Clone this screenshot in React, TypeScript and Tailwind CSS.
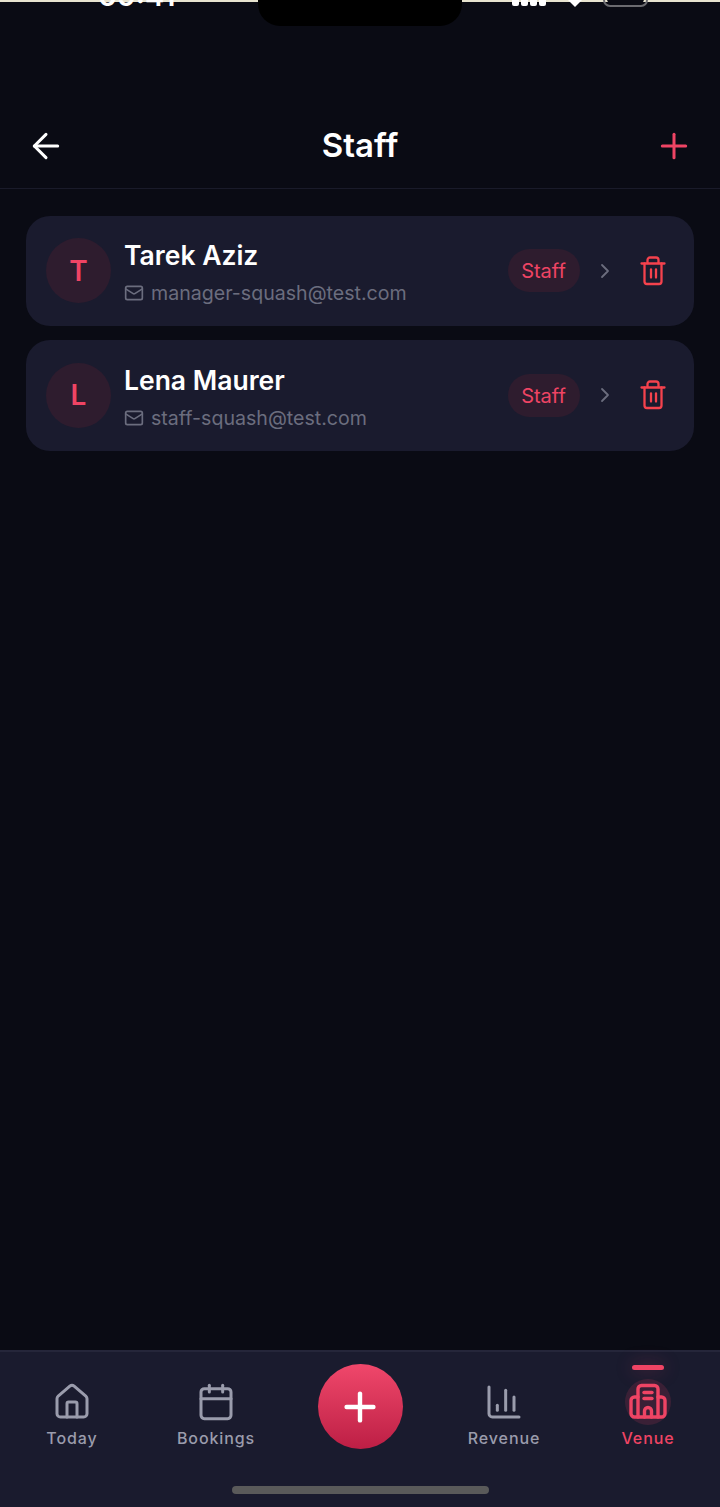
import { ArrowLeft, Plus, Mail, ChevronRight, House, Calendar, ChartColumn } from 'lucide-react'

const STAFF = [
  { name: 'Tarek Aziz', email: 'manager-squash@test.com' },
  { name: 'Lena Maurer', email: 'staff-squash@test.com' },
]

function StatusBar() {
  return (
    <div className="relative h-[120px] shrink-0 overflow-hidden">
      <div className="flex h-0.5 bg-[#e8e4d0]" />
      {/* clipped clock */}
      <span className="absolute left-[98px] top-[-17px] text-[29px] leading-[26px] font-semibold text-white">09:41</span>
      <div className="absolute left-[258px] top-0 h-[26px] w-[204px] rounded-b-[22px] bg-black" />
      <div className="absolute left-[512px] top-0 flex items-end gap-[2px]">
        <div className="h-[6px] w-[7px] rounded-b-[2px] bg-white" />
        <div className="h-[6px] w-[7px] rounded-b-[2px] bg-white" />
        <div className="h-[6px] w-[7px] rounded-b-[2px] bg-white" />
        <div className="h-[6px] w-[7px] rounded-b-[2px] bg-white" />
      </div>
      <svg className="absolute left-[568px] top-0" width="14" height="7" viewBox="0 0 14 7">
        <path d="M0 0h14L7 7z" fill="#fff" />
      </svg>
      <div className="absolute left-[603px] top-[-14px] h-[21px] w-[45px] rounded-[7px] border-2 border-[#6b6b70]" />
      <div className="absolute left-[607px] top-[-10px] h-[13px] w-[37px] rounded-[4px] bg-[#0a0b14]" />
    </div>
  )
}

function TrashIcon() {
  return (
    <svg width="26" height="30" viewBox="0 0 26 30" fill="none" stroke="currentColor" strokeWidth="2.3" strokeLinecap="round" strokeLinejoin="round">
      <path d="M1.5 7.5h23" />
      <path d="M4.5 7.5V25.5a2.5 2.5 0 0 0 2.5 2.5h12a2.5 2.5 0 0 0 2.5-2.5V7.5" />
      <path d="M7.5 7V4a2.5 2.5 0 0 1 2.5-2.5h6a2.5 2.5 0 0 1 2.5 2.5V7" />
      <path d="M11 13.5v8" />
      <path d="M16 13.5v8" />
    </svg>
  )
}

function StaffCard({ name, email }: { name: string; email: string }) {
  return (
    <div className="flex h-[110.5px] items-center rounded-[24px] bg-[#1a1b2e] pl-5 pr-7">
      <div className="flex size-[65px] shrink-0 items-center justify-center rounded-full bg-[#2e1c2e] text-[28px] font-semibold text-[#ef4464]">
        {name[0]}
      </div>
      <div className="ml-[13px] min-w-0 flex-1 pt-1">
        <div className="text-[26.5px] leading-[34px] font-semibold text-white">{name}</div>
        <div className="mt-[7px] flex items-center gap-[7px] text-[19.6px] leading-[28px] text-[#6b6d7e]">
          <Mail size={20} strokeWidth={2} />
          <span>{email}</span>
        </div>
      </div>
      <div className="flex h-[43px] w-[72px] items-center justify-center rounded-full bg-[#2e1c2e] pt-px pr-px text-[20px] text-[#ef4464]">Staff</div>
      <ChevronRight size={24} strokeWidth={1.8} className="ml-[13px] text-[#6b6d7e]" />
      <div className="ml-[23px] text-[#f5424d]">
        <TrashIcon />
      </div>
    </div>
  )
}

function BuildingIcon() {
  return (
    <svg width="38" height="38" viewBox="0 0 38 38" fill="none" stroke="currentColor" strokeWidth="3.4" strokeLinecap="round" strokeLinejoin="round">
      <path d="M9 34V6a3.5 3.5 0 0 1 3.5-3.5h13A3.5 3.5 0 0 1 29 6v28" />
      <path d="M9 14H5.5A3.5 3.5 0 0 0 2 17.5V30.5A3.5 3.5 0 0 0 5.5 34h27a3.5 3.5 0 0 0 3.5-3.5V17.5A3.5 3.5 0 0 0 32.5 14H29" />
      <path d="M15 9.5h8" />
      <path d="M15 15.5h8" />
      <path d="M15.5 34v-6a3.5 3.5 0 0 1 7 0v6" />
    </svg>
  )
}

function NavItem({ label, active, children }: { label: string; active?: boolean; children: React.ReactNode }) {
  return (
    <div className={`flex w-[144px] flex-col items-center ${active ? 'text-[#ef4464]' : 'text-[#9a9cac]'}`}>
      <div className="flex h-[40px] items-center justify-center">{children}</div>
      <span className="mt-[6px] text-[16px] leading-[20px] font-medium tracking-[0.9px]">{label}</span>
    </div>
  )
}

export default function App() {
  return (
    <div className="flex h-[1507px] w-[720px] flex-col overflow-hidden bg-[#0a0b14] font-['Inter',sans-serif]">
      <StatusBar />
      <header className="flex h-[69px] shrink-0 items-center justify-between border-b border-[#1a1b2a] px-[26px] pb-[17px]">
        <ArrowLeft size={40} strokeWidth={1.8} className="text-white" />
        <h1 className="text-[33px] font-semibold text-white">Staff</h1>
        <Plus size={40} strokeWidth={1.8} className="text-[#ef4464]" />
      </header>

      <main className="flex flex-1 flex-col gap-[14px] px-[26px] pt-[26.5px]">
        {STAFF.map(s => (
          <StaffCard key={s.name} name={s.name} email={s.email} />
        ))}
      </main>

      <nav className="relative flex h-[157px] shrink-0 border-t-2 border-[#25263a] bg-[#1a1b2e] pt-[30px]">
        <NavItem label="Today">
          <House size={40} strokeWidth={1.8} />
        </NavItem>
        <NavItem label="Bookings">
          <Calendar size={40} strokeWidth={1.8} />
        </NavItem>
        <div className="flex w-[144px] justify-center">
          <div className="-mt-[18px] flex size-[85px] items-center justify-center rounded-full bg-gradient-to-b from-[#f0476b] to-[#bd1e45]">
            <Plus size={46} strokeWidth={2.3} className="text-white" />
          </div>
        </div>
        <NavItem label="Revenue">
          <ChartColumn size={40} strokeWidth={1.8} />
        </NavItem>
        <NavItem label="Venue" active>
          <div className="absolute top-[27px] right-[49px] size-[46px] rounded-full bg-[#ef4464]/15" />
          <div className="absolute top-[13px] right-[56px] h-[5px] w-[32px] rounded-full bg-[#ef4464] shadow-[0_0_18px_rgba(240,67,106,0.35)]" />
          <div className="relative"><BuildingIcon /></div>
        </NavItem>
        <div className="absolute bottom-[13px] left-[232px] h-[8px] w-[257px] rounded-full bg-[#5a5a5a]" />
      </nav>
    </div>
  )
}
